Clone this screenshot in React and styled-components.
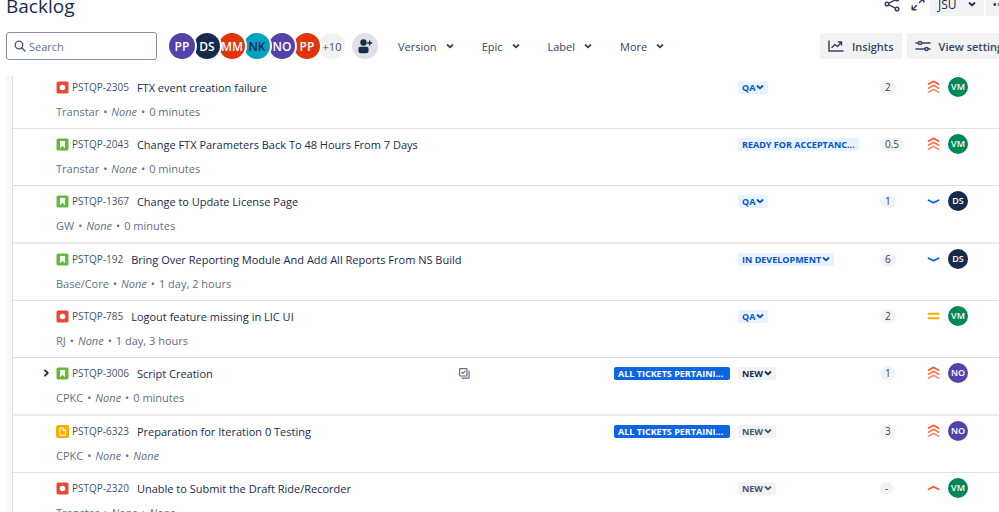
import styled, { createGlobalStyle, css } from "styled-components";

const GlobalStyle = createGlobalStyle`
  * {
    box-sizing: border-box;
  }

  body {
    margin: 0;
    overflow: hidden;
    background-color: white;
    color: #172b4d;
    font-family: "Open Sans", "Noto Sans", sans-serif;
    font-size: 11px;
  }

  button, input {
    font: inherit;
    color: inherit;
  }
`;

const Page = styled.main`
  height: 100vh;
  display: flex;
  flex-direction: column;
  overflow: hidden;
`;

const Header = styled.header`
  flex: none;
  display: flex;
  justify-content: space-between;
  align-items: center;
  height: 28px;
  margin-top: -10px;
  padding-left: 6px;
`;

const Title = styled.h1`
  margin: 0;
  padding-top: 3px;
  font-size: 19px;
  line-height: 24px;
  font-weight: 500;
`;

const HeaderTools = styled.div`
  flex: 0 0 115px;
  min-width: 0;
  display: flex;
  align-items: center;
  gap: 5px;
`;

const IconButton = styled.button`
  flex: none;
  display: flex;
  padding: 0;
  border: none;
  background: none;
  color: #344563;
  cursor: pointer;

  & + & {
    margin-left: 6px;
  }
`;

const Split = styled.div`
  display: flex;
  gap: 1px;
`;

const Button = styled.button`
  flex: none;
  display: flex;
  align-items: center;
  gap: 8px;
  height: 26px;
  padding: 0 8px;
  border: none;
  border-radius: 2px;
  background-color: #f1f2f4;
  color: #344563;
  font-weight: 600;
  white-space: nowrap;
  cursor: pointer;
`;

const SplitButton = styled(Button)`
  gap: 11px;
  height: 24px;
  color: #172b4d;
  font-size: 12px;
  font-weight: 500;
`;

const Toolbar = styled.div`
  flex: none;
  display: flex;
  align-items: center;
  height: 28px;
  margin: 14px 0 16px;
  padding-left: 6px;
`;

const SearchBox = styled.label`
  flex: none;
  display: flex;
  align-items: center;
  gap: 3px;
  width: 151px;
  height: 28px;
  padding: 0 7px;
  border: 1px solid #8590a2;
  border-radius: 3px;
  color: #44546f;
`;

const SearchInput = styled.input`
  flex: 1;
  min-width: 0;
  padding: 0;
  border: none;
  outline: none;
  background: none;

  &::placeholder {
    color: #626f86;
    opacity: 1;
  }
`;

const People = styled.div`
  flex: none;
  display: flex;
  isolation: isolate;
  margin: 0 10px;
`;

const Person = styled.button`
  position: relative;
  z-index: ${(props) => props.$layer};
  display: flex;
  align-items: center;
  justify-content: center;
  width: 30px;
  height: 30px;
  margin-right: -5px;
  padding: 0;
  border: 2px solid white;
  border-radius: 50%;
  background-color: ${(props) => props.$color};
  color: ${(props) => props.$text || "white"};
  font-size: ${(props) => (props.$more ? "11px" : "12px")};
  font-weight: ${(props) => (props.$more ? 400 : 600)};
  cursor: pointer;
`;

const AddPeople = styled.button`
  flex: none;
  display: flex;
  align-items: center;
  justify-content: center;
  width: 26px;
  height: 26px;
  padding: 0;
  border: none;
  border-radius: 50%;
  background-color: #dfe1e6;
  color: #172b4d;
  cursor: pointer;
`;

const Filters = styled.div`
  flex: 1;
  display: flex;
  gap: 12px;
  padding-left: 12px;
`;

const Filter = styled(Button)`
  gap: 9px;
  background: none;
  font-weight: 500;
`;

const Actions = styled.div`
  flex: 0 0 179px;
  min-width: 0;
  display: flex;
  gap: 5px;
`;

const Board = styled.section`
  flex: 1;
  min-height: 0;
  margin-left: 6px;
  padding-left: 6px;
  background-color: #f7f8f9;
  overflow: hidden;
`;

const IssueList = styled.ul`
  margin: 0;
  padding: 0;
  list-style: none;
  border-left: 1px solid #dcdfe4;
  background-color: white;
`;

const Issue = styled.li`
  padding: 5px 31px 6px 30px;
  border-bottom: 1px solid #dfe1e6;

  &:first-child {
    padding-top: 1px;
  }

  &:nth-child(3n) {
    border-bottom: 2px solid #ebecf0;
  }
`;

const IssueMain = styled.div`
  display: flex;
  align-items: center;
  height: 20px;
`;

const Expander = styled.button`
  flex: none;
  display: flex;
  width: 13px;
  padding: 0;
  border: none;
  background: none;
  visibility: ${(props) => (props.$shown ? "visible" : "hidden")};
  cursor: pointer;
`;

const Key = styled.a`
  flex: none;
  margin: 0 8px 0 3px;
  color: #44546f;
  font-size: 10px;
  font-weight: 500;
  text-decoration: none;
`;

const Summary = styled.span`
  flex: 1;
  min-width: 0;
  overflow: hidden;
  text-overflow: ellipsis;
  white-space: nowrap;
`;

const Subtasks = styled.span`
  flex: none;
  display: flex;
  width: 155px;
  color: #626f86;
`;

const tag = css`
  height: 13px;
  padding: 0 4px;
  border: none;
  border-radius: 2px;
  font-size: 9px;
  line-height: 13px;
  font-weight: 700;
  white-space: nowrap;
`;

const EpicCell = styled.div`
  flex: none;
  width: 124px;
  padding-right: 8px;
`;

const Epic = styled.div`
  ${tag}
  background-color: #0c66e4;
  color: white;
  overflow: hidden;
`;

const StatusCell = styled.div`
  flex: none;
  width: 142px;
  display: flex;
`;

const tones = {
  blue: css`
    background-color: #e9f2ff;
    color: #0055cc;
  `,
  dark: css`
    background-color: #f1f2f4;
    color: #172b4d;
  `,
  grey: css`
    background-color: #f1f2f4;
    color: #44546f;
  `,
};

const Status = styled.button`
  ${tag}
  display: flex;
  align-items: center;
  gap: 1px;
  cursor: pointer;
  ${(props) => tones[props.$tone]}
`;

const PointsCell = styled.div`
  flex: none;
  width: 47px;
  display: flex;
`;

const Points = styled.span`
  padding: 0 5px;
  border-radius: 7px;
  background-color: #f1f2f4;
  color: #344563;
  font-size: 10px;
  line-height: 13px;
`;

const Assignee = styled.span`
  flex: none;
  width: 20px;
  height: 20px;
  margin-left: 8px;
  border-radius: 50%;
  background-color: ${(props) => props.$color};
  color: white;
  font-size: 9px;
  line-height: 20px;
  font-weight: 600;
  text-align: center;
`;

const Meta = styled.div`
  height: 20px;
  margin: 5px 0 0 13px;
  color: #626f86;
  line-height: 20px;
`;

const Dot = styled.span`
  margin: 0 4px;
`;

const Svg = ({ size = 12, w = size, h = size, sw = 1.5, children }) => (
  <svg
    width={w}
    height={h}
    viewBox={`0 0 ${w} ${h}`}
    fill="none"
    stroke="currentColor"
    strokeWidth={sw}
    strokeLinecap="round"
    strokeLinejoin="round"
    aria-hidden="true"
  >
    {children}
  </svg>
);

const Chevron = () => (
  <Svg w={8} h={6} sw={1.8}>
    <path d="M1.5 2 4 4.4 6.5 2" />
  </Svg>
);

const TypeIcon = ({ type }) => {
  if (type === "bug") {
    return (
      <svg width="13" height="13" role="img" aria-label="Bug">
        <rect x="0.5" y="0.5" width="12" height="12" rx="1.5" fill="#e5493a" />
        <circle cx="6.5" cy="6.5" r="2.8" fill="white" />
      </svg>
    );
  }
  if (type === "story") {
    return (
      <svg width="13" height="13" role="img" aria-label="Story">
        <rect x="0.5" y="0.5" width="12" height="12" rx="1.5" fill="#63ba3c" />
        <path d="M4 3h5v7.2L6.5 7.8 4 10.2z" fill="white" />
      </svg>
    );
  }
  return (
    <svg width="13" height="13" role="img" aria-label="Document">
      <rect width="13" height="13" rx="2" fill="#ffab00" />
      <path d="M3.8 3h3.4l2.3 2.3v5H3.8zM6.9 3v2.6h2.6" fill="none" stroke="white" />
    </svg>
  );
};

const Priority = ({ level }) => (
  <svg width="13" height="14" role="img" aria-label={level} fill="none" strokeWidth="1.7" strokeLinecap="round" strokeLinejoin="round">
    {level === "Highest" && (
      <>
        <path d="M1.5 4.2 6.5 1.3l5 2.9" stroke="#ff5630" />
        <path d="M1.5 8.2 6.5 5.3l5 2.9" stroke="#ff7452" />
        <path d="M1.5 12.2 6.5 9.3l5 2.9" stroke="#ff8f73" />
      </>
    )}
    {level === "High" && <path d="M1.5 8.3 6.5 5.7l5 2.6" stroke="#ff5630" />}
    {level === "Medium" && <path d="M1.5 4.7h10M1.5 9.3h10" stroke="#ffab00" strokeWidth="2" />}
    {level === "Low" && <path d="M1.5 6.2 6.5 8.8l5-2.6" stroke="#0065ff" strokeWidth="1.8" />}
  </svg>
);

const people = [
  { name: "PP", color: "#5243aa" },
  { name: "DS", color: "#172b4d" },
  { name: "MM", color: "#de350b" },
  { name: "NK", color: "#00a3bf", text: "#172b4d" },
  { name: "NO", color: "#5243aa" },
  { name: "PP", color: "#de350b" },
  { name: "+10", color: "#f1f2f4", text: "#44546f", more: true },
];

const assignees = { VM: "#00875a", DS: "#172b4d", NO: "#5243aa" };

const issues = [
  { type: "bug", key: "PSTQP-2305", summary: "FTX event creation failure", meta: ["Transtar", null, "0 minutes"], status: "QA", tone: "blue", points: "2", priority: "Highest", who: "VM" },
  { type: "story", key: "PSTQP-2043", summary: "Change FTX Parameters Back To 48 Hours From 7 Days", meta: ["Transtar", null, "0 minutes"], status: "READY FOR ACCEPTANC...", tone: "blue", full: true, points: "0.5", priority: "Highest", who: "VM" },
  { type: "story", key: "PSTQP-1367", summary: "Change to Update License Page", meta: ["GW", null, "0 minutes"], status: "QA", tone: "blue", points: "1", priority: "Low", who: "DS" },
  { type: "story", key: "PSTQP-192", summary: "Bring Over Reporting Module And Add All Reports From NS Build", meta: ["Base/Core", null, "1 day, 2 hours"], status: "IN DEVELOPMENT", tone: "blue", points: "6", priority: "Low", who: "DS" },
  { type: "bug", key: "PSTQP-785", summary: "Logout feature missing in LIC UI", meta: ["RJ", null, "1 day, 3 hours"], status: "QA", tone: "blue", points: "2", priority: "Medium", who: "VM" },
  { type: "story", key: "PSTQP-3006", summary: "Script Creation", meta: ["CPKC", null, "0 minutes"], epic: "ALL TICKETS PERTAINI...", status: "NEW", tone: "dark", points: "1", priority: "Highest", who: "NO", parent: true },
  { type: "document", key: "PSTQP-6323", summary: "Preparation for Iteration 0 Testing", meta: ["CPKC", null, null], epic: "ALL TICKETS PERTAINI...", status: "NEW", tone: "grey", points: "3", priority: "Highest", who: "NO" },
  { type: "bug", key: "PSTQP-2320", summary: "Unable to Submit the Draft Ride/Recorder", meta: ["Transtar", null, null], status: "NEW", tone: "grey", points: "-", priority: "High", who: "VM" },
];

const IssueRow = ({ issue }) => (
  <Issue>
    <IssueMain>
      <Expander $shown={issue.parent} aria-label="Expand">
        <Svg w={8} h={10} sw={1.8}>
          <path d="M2 2.3 4.8 5 2 7.7" />
        </Svg>
      </Expander>
      <TypeIcon type={issue.type} />
      <Key href="#">{issue.key}</Key>
      <Summary>{issue.summary}</Summary>
      {issue.parent && (
        <Subtasks>
          <Svg size={11} sw={1.2}>
            <rect x="0.6" y="0.6" width="7.4" height="7.4" rx="0.5" />
            <path d="M2.7 4.3 3.9 5.4 6 3.1M10.1 3v7.1H3" />
          </Svg>
        </Subtasks>
      )}
      <EpicCell>{issue.epic && <Epic>{issue.epic}</Epic>}</EpicCell>
      <StatusCell>
        <Status $tone={issue.tone}>
          {issue.status}
          {!issue.full && <Chevron />}
        </Status>
      </StatusCell>
      <PointsCell>
        <Points>{issue.points}</Points>
      </PointsCell>
      <Priority level={issue.priority} />
      <Assignee $color={assignees[issue.who]}>{issue.who}</Assignee>
    </IssueMain>
    <Meta>
      {issue.meta.map((value, i) => (
        <span key={i}>
          {i > 0 && <Dot>•</Dot>}
          {value || <em>None</em>}
        </span>
      ))}
    </Meta>
  </Issue>
);

const App = () => {
  return (
    <Page>
      <GlobalStyle />
      <Header>
        <Title>Backlog</Title>
        <HeaderTools>
          <IconButton aria-label="Share">
            <Svg size={16}>
              <circle cx="3" cy="8" r="1.8" />
              <circle cx="13" cy="3" r="1.8" />
              <circle cx="13" cy="13" r="1.8" />
              <path d="m4.8 7.1 6.5-3.2M4.8 8.9l6.5 3.2" />
            </Svg>
          </IconButton>
          <IconButton aria-label="Full screen">
            <Svg size={14}>
              <path d="M8.5 5.5 12.5 1.5M9 1.2h3.8V5M5.5 8.5l-4 4M1.2 9v3.8H5" />
            </Svg>
          </IconButton>
          <Split>
            <SplitButton>
              JSU
              <Chevron />
            </SplitButton>
            <SplitButton aria-label="More actions">•••</SplitButton>
          </Split>
        </HeaderTools>
      </Header>
      <Toolbar>
        <SearchBox>
          <Svg size={12} sw={1.3}>
            <circle cx="5" cy="5" r="3.8" />
            <path d="m8 8 3 3" />
          </Svg>
          <SearchInput placeholder="Search" aria-label="Search" />
        </SearchBox>
        <People>
          {people.map((person, i) => (
            <Person key={i} $color={person.color} $text={person.text} $more={person.more} $layer={people.length - i}>
              {person.name}
            </Person>
          ))}
        </People>
        <AddPeople aria-label="Add people">
          <svg width="16" height="16" fill="currentColor" aria-hidden="true">
            <circle cx="6.5" cy="4.5" r="3.2" />
            <path d="M1.5 10.5a1.8 1.8 0 0 1 1.8-1.8h6.4a1.8 1.8 0 0 1 1.8 1.8v2.7a2 2 0 0 1-2 2h-6a2 2 0 0 1-2-2z" />
            <path d="M12.7 2.5v5M10.2 5h5" stroke="currentColor" strokeWidth="1.4" />
          </svg>
        </AddPeople>
        <Filters>
          {["Version", "Epic", "Label", "More"].map((name) => (
            <Filter key={name}>
              {name}
              <Chevron />
            </Filter>
          ))}
        </Filters>
        <Actions>
          <Button>
            <Svg w={16} h={12}>
              <path d="M1 1v10h14M4 7.5l3-3 2.5 2L13.5 2M10.5 2h3v3" />
            </Svg>
            Insights
          </Button>
          <Button>
            <Svg w={16} h={12}>
              <circle cx="5" cy="3" r="1.6" />
              <circle cx="11.5" cy="9" r="1.6" />
              <path d="M1 3h2.4M6.6 3H15M1 9h8.9M13.1 9H15" />
            </Svg>
            View settings
          </Button>
        </Actions>
      </Toolbar>
      <Board>
        <IssueList>
          {issues.map((issue) => (
            <IssueRow key={issue.key} issue={issue} />
          ))}
        </IssueList>
      </Board>
    </Page>
  );
};

export default App;
